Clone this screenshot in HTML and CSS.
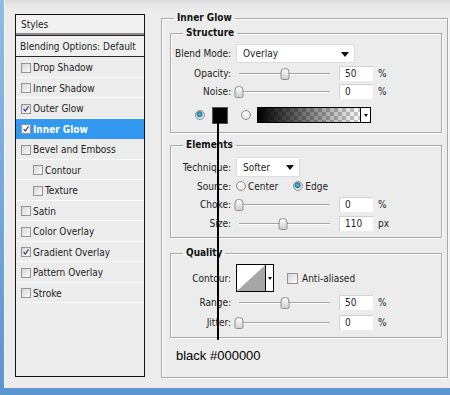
FILE: index.html
```html
<!DOCTYPE html>
<html lang="en">
<head>
    <meta charset="UTF-8">
    <title>Layer Style - Inner Glow</title>
    <link rel="stylesheet" href="styles.css">
</head>
<body>
    <div class="dialog">
        <div class="styles-list">
            <div class="list-head">Styles</div>
            <div class="list-blend">Blending Options: Default</div>
            <div class="list-item"><span class="check"></span>Drop Shadow</div>
            <div class="list-item"><span class="check"></span>Inner Shadow</div>
            <div class="list-item"><span class="check checked"><svg viewBox="0 0 10 10"><path d="M2 5 L4.2 7.6 L8.2 1.8" /></svg></span>Outer Glow</div>
            <div class="list-item active"><span class="check checked"><svg viewBox="0 0 10 10"><path d="M2 5 L4.2 7.6 L8.2 1.8" /></svg></span>Inner Glow</div>
            <div class="list-item"><span class="check"></span>Bevel and Emboss</div>
            <div class="list-item sub"><span class="check"></span>Contour</div>
            <div class="list-item sub"><span class="check"></span>Texture</div>
            <div class="list-item"><span class="check"></span>Satin</div>
            <div class="list-item"><span class="check"></span>Color Overlay</div>
            <div class="list-item"><span class="check checked"><svg viewBox="0 0 10 10"><path d="M2 5 L4.2 7.6 L8.2 1.8" /></svg></span>Gradient Overlay</div>
            <div class="list-item"><span class="check"></span>Pattern Overlay</div>
            <div class="list-item"><span class="check"></span>Stroke</div>
        </div>

        <div class="settings">
            <fieldset class="group outer">
                <legend>Inner Glow</legend>

                <fieldset class="group structure">
                    <legend>Structure</legend>
                    <div class="row row-tall">
                        <span class="label">Blend Mode:</span>
                        <div class="select select-wide">Overlay<span class="caret"></span></div>
                    </div>
                    <div class="row row-opacity">
                        <span class="label">Opacity:</span>
                        <div class="slider"><div class="track"><span class="thumb" style="left: 50%"></span></div></div>
                        <div class="num">50</div><span class="unit">%</span>
                    </div>
                    <div class="row">
                        <span class="label">Noise:</span>
                        <div class="slider"><div class="track"><span class="thumb" style="left: 0%"></span></div></div>
                        <div class="num">0</div><span class="unit">%</span>
                    </div>
                    <div class="row row-color">
                        <span class="radio on"></span>
                        <span class="swatch"></span>
                        <span class="radio"></span>
                        <span class="gradient"></span>
                        <span class="grad-btn"><span class="caret"></span></span>
                    </div>
                </fieldset>

                <fieldset class="group elements">
                    <legend>Elements</legend>
                    <div class="row row-technique">
                        <span class="label">Technique:</span>
                        <div class="select select-small">Softer<span class="caret"></span></div>
                    </div>
                    <div class="row row-source">
                        <span class="label">Source:</span>
                        <span class="radio"></span><span class="opt">Center</span>
                        <span class="radio on"></span><span class="opt">Edge</span>
                    </div>
                    <div class="row row-19">
                        <span class="label">Choke:</span>
                        <div class="slider"><div class="track"><span class="thumb" style="left: 0%"></span></div></div>
                        <div class="num">0</div><span class="unit">%</span>
                    </div>
                    <div class="row row-19">
                        <span class="label">Size:</span>
                        <div class="slider"><div class="track"><span class="thumb" style="left: 48%"></span></div></div>
                        <div class="num">110</div><span class="unit">px</span>
                    </div>
                </fieldset>

                <fieldset class="group quality">
                    <legend>Quality</legend>
                    <div class="row row-contour">
                        <span class="label">Contour:</span>
                        <div class="contour">
                            <svg class="curve" viewBox="0 0 30 26" preserveAspectRatio="none"><polygon points="30,0 30,26 0,26" fill="#a6a6a6" /></svg>
                            <span class="contour-btn"><span class="caret"></span></span>
                        </div>
                        <span class="check aa"></span><span class="opt">Anti-aliased</span>
                    </div>
                    <div class="row row-range">
                        <span class="label">Range:</span>
                        <div class="slider"><div class="track"><span class="thumb" style="left: 50%"></span></div></div>
                        <div class="num">50</div><span class="unit">%</span>
                    </div>
                    <div class="row">
                        <span class="label">Jitter:</span>
                        <div class="slider"><div class="track"><span class="thumb" style="left: 0%"></span></div></div>
                        <div class="num">0</div><span class="unit">%</span>
                    </div>
                </fieldset>
            </fieldset>
        </div>

        <!-- annotation over the dialog -->
        <div class="callout-line"></div>
        <div class="callout-text">black #000000</div>
    </div>
</body>
</html>
```

FILE: styles.css
```css
body {
    margin: 0;
    width: 450px;
    height: 395px;
    overflow: hidden;
    background: linear-gradient(to bottom, #8fbbe6, #5c95d2);
    font-family: "DejaVu Sans Condensed", "Liberation Sans", sans-serif;
    font-size: 10px;
    color: #1c1c1c;
}

.dialog {
    position: relative;
    display: flex;
    gap: 16px;
    height: 388px;
    box-sizing: border-box;
    margin-left: 4px;
    padding: 12px 0 0 10px;
    border-left: 1px solid #f4f4f4;
    background: linear-gradient(to bottom, #d9d9d9 0, #e6e6e6 4px, #ececec 12px);
}

/* left list */
.styles-list {
    width: 130px;
    height: 363px;
    margin-top: 2px;
    box-sizing: border-box;
    border: 1px solid #151515;
    background: #ececec;
}

.list-head {
    height: 16px;
    line-height: 16px;
    padding: 2px 0 0 5px;
    background: #f1f1f1;
    border-bottom: 2px solid #8a8a8a;
}

.list-blend {
    height: 18px;
    line-height: 18px;
    padding: 2px 0 0 4px;
    background: #f0f0f0;
    border-top: 1px solid #2a2a2a;
    border-bottom: 1px solid #2a2a2a;
}

.list-item {
    display: flex;
    align-items: center;
    height: 17.5px;
    padding: 2px 0 0 5px;
    border-bottom: 1px solid #fbfbfb;
}

.list-item.sub {
    padding-left: 17px;
}

.list-item.active {
    background: #3399f0;
    color: #fff;
    font-weight: bold;
    border-bottom-color: #3399f0;
}

.check {
    display: inline-block;
    width: 10px;
    height: 10px;
    margin-right: 2px;
    box-sizing: border-box;
    border: 1px solid #939393;
    background: linear-gradient(135deg, #d6d6d6, #fbfbfb);
}

.check svg {
    display: block;
    width: 8px;
    height: 8px;
}

.check svg path {
    fill: none;
    stroke: #2c3f96;
    stroke-width: 1.5;
}

.active .check {
    background: #fff;
}

/* right side */
.settings {
    width: 287px;
}

.group {
    margin: 0;
    padding: 0;
    min-width: 0;
    border: 1px solid #a9a9a9;
    box-shadow: inset 1px 1px 0 #fff, 1px 1px 0 #fff;
}

.group legend {
    margin-left: 12px;
    padding: 0 3px;
    font-weight: bold;
    line-height: 12px;
    color: #111;
}

.outer {
    height: 366px;
    box-sizing: border-box;
    padding: 3px 5px 0 8px;
}

.outer > legend {
    margin-left: 4px;
}

.structure {
    padding: 5px 0 8px;
}

.elements {
    margin-top: 6px;
    padding: 6px 0 4px;
}

.quality {
    margin-top: 9px;
    padding: 5px 0 6px;
}

.row {
    display: flex;
    align-items: center;
    height: 18px;
}

.row-tall { height: 19px; }
.row-opacity { margin-top: 1px; }
.row-color { margin-top: 6px; }
.row-technique { height: 20px; }
.row-19 { height: 19px; }
.row-contour { height: 28px; }
.row-range { height: 21px; }

.label {
    width: 60px;
    margin-right: 5px;
    text-align: right;
}

.select {
    position: relative;
    box-sizing: border-box;
    height: 19px;
    line-height: 18px;
    padding-left: 6px;
    background: #fff;
    border: 1px solid #dedede;
}

.select-wide { width: 119px; }
.select-small { width: 64px; height: 20px; line-height: 19px; }

.caret {
    display: inline-block;
    width: 0;
    height: 0;
    border-top: 5px solid #111;
    border-left: 4px solid transparent;
    border-right: 4px solid transparent;
}

.select .caret {
    position: absolute;
    right: 5px;
    top: 7px;
}

.slider {
    width: 94px;
    margin-right: 9px;
}

.track {
    position: relative;
    height: 11px;
    margin-left: 3px;
}

.track::before {
    content: '';
    position: absolute;
    left: 0;
    right: 0;
    top: 5px;
    height: 1px;
    background: #a5a5a5;
    box-shadow: 0 1px 0 #fff;
}

.thumb {
    position: absolute;
    top: 0;
    width: 7px;
    height: 10px;
    transform: translateX(-50%);
    border: 1px solid #8d8d8d;
    border-radius: 4px 4px 2px 2px;
    background: linear-gradient(to bottom, #fdfdfd, #cfcfcf);
}

.num {
    width: 34px;
    height: 15px;
    box-sizing: border-box;
    padding-left: 5px;
    line-height: 14px;
    background: #fff;
    border-top: 1px solid #d2d2d2;
    border-left: 1px solid #d2d2d2;
}

.unit {
    margin-left: 5px;
}

.radio {
    display: inline-block;
    width: 10px;
    height: 10px;
    box-sizing: border-box;
    border: 1px solid #8e8e8e;
    border-radius: 50%;
    background: radial-gradient(circle at 40% 35%, #ffffff, #d9d9d9);
}

.radio.on {
    background: radial-gradient(circle at 45% 40%, #5fc4de 0, #237b9c 2.5px, #dfe6ea 3.5px);
}

.row-color .radio:first-child {
    margin-left: 24px;
}

.swatch {
    width: 14px;
    height: 15px;
    margin: 0 13px 0 7px;
    background: #000;
    border: 1px solid #555;
}

.gradient {
    width: 104px;
    height: 16px;
    margin-left: 6px;
    box-sizing: border-box;
    border: 1px solid #000;
    background:
        linear-gradient(90deg, #000, rgba(0, 0, 0, 0)),
        repeating-conic-gradient(#c8c8c8 0 25%, #ffffff 0 50%) 0 0 / 8px 8px;
}

.grad-btn {
    display: flex;
    align-items: center;
    justify-content: center;
    width: 10px;
    height: 16px;
    box-sizing: border-box;
    border: 1px solid #000;
    border-left: none;
    background: #fff;
}

.grad-btn .caret {
    border-top-width: 3px;
    border-left-width: 2px;
    border-right-width: 2px;
}

.row-source .radio {
    margin-right: 2px;
}

.row-source .opt:nth-child(3) {
    margin-right: 15px;
}

.contour {
    display: flex;
    width: 38px;
    height: 28px;
    box-sizing: border-box;
    border: 1px solid #000;
    background: #fff;
}

.curve {
    width: 29px;
    height: 26px;
    display: block;
}

.contour-btn {
    display: flex;
    align-items: center;
    justify-content: center;
    width: 7px;
    border-left: 1px solid #000;
    background: #fff;
}

.contour-btn .caret {
    border-top-width: 3px;
    border-left-width: 2px;
    border-right-width: 2px;
}

.check.aa {
    width: 11px;
    height: 11px;
    margin: 0 4px 0 13px;
}

/* annotation */
.callout-line {
    position: absolute;
    left: 212px;
    top: 122px;
    width: 2px;
    height: 218px;
    background: #000;
}

.callout-text {
    position: absolute;
    left: 171px;
    top: 348px;
    font-family: "Liberation Sans", Arial, sans-serif;
    font-size: 13px;
    line-height: 16px;
    color: #000;
}
```
